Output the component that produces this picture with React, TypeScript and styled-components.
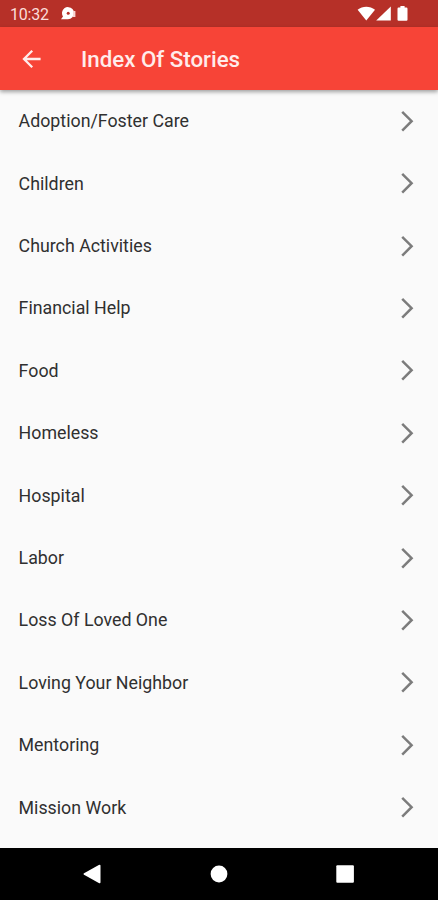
import React from 'react';
import styled, { createGlobalStyle } from 'styled-components';

const GlobalStyle = createGlobalStyle`
  * { box-sizing: border-box; }
  body { margin: 0; background: #fafafa; font-family: Roboto, sans-serif; }
`;

const Screen = styled.div`
  width: 438px;
  height: 900px;
  display: flex;
  flex-direction: column;
  overflow: hidden;
  background: #fafafa;
`;

const StatusBar = styled.div`
  height: 27px;
  flex: none;
  display: flex;
  align-items: center;
  padding: 1px 28px 0 10px;
  background: #b63028;
  color: #fbdcd9;
  font-size: 16px;
`;

const Clock = styled.span`
  width: 50px;
  letter-spacing: -0.2px;
`;

const StatusIcons = styled.div`
  display: flex;
  margin-left: auto;
`;

const AppBar = styled.header`
  height: 62.5px;
  flex: none;
  display: flex;
  align-items: center;
  padding: 1px 18px 0 22px;
  background: #f74437;
  color: #ffeceb;
  box-shadow: 0 2px 4px rgba(0, 0, 0, 0.36);
  z-index: 1;
`;

const BackButton = styled.button`
  width: 59px;
  height: 40px;
  padding: 0;
  border: 0;
  background: none;
  color: inherit;
  display: flex;
  align-items: center;
`;

const Title = styled.h1`
  margin: 0;
  font-size: 22.3px;
  font-weight: 500;
  white-space: nowrap;
`;

const List = styled.ul`
  flex: 1;
  min-height: 0;
  margin: 0;
  padding: 0;
  list-style: none;
  overflow: hidden;
`;

const Row = styled.li`
  height: 62.42px;
  display: flex;
  align-items: center;
  justify-content: space-between;
  padding: 0 23px 0 18.6px;
  color: #303030;
  font-size: 17.8px;
`;

const NavBar = styled.nav`
  height: 52.5px;
  flex: none;
  display: flex;
  align-items: center;
  justify-content: space-between;
  padding: 0 83px 0 82px;
  background: #000;
`;

const stories = [
  'Adoption/Foster Care',
  'Children',
  'Church Activities',
  'Financial Help',
  'Food',
  'Homeless',
  'Hospital',
  'Labor',
  'Loss Of Loved One',
  'Loving Your Neighbor',
  'Mentoring',
  'Mission Work',
];

export default function App() {
  return (
    <Screen>
      <GlobalStyle />
      <StatusBar>
        <Clock>10:32</Clock>
        <svg width="18" height="16" viewBox="0 0 18 16">
          <path d="M1 13.3 3 10.4A6 6 0 1 1 12.4 11.2 6 6 0 0 1 7 13.3Z" fill="#fff" />
          <circle cx="8.2" cy="7.2" r="1.5" fill="#b63028" />
          <path d="M13 5h2.4v6H13z" fill="#f8d5d2" />
        </svg>
        <StatusIcons>
          <svg width="53" height="18" viewBox="0 0 53 18" fill="#fff">
            <path d="M.6 4.7C5.5.7 13 .7 18 4.7L9.3 15.4Z" />
            <path d="M33.8 1.5v14H19.2Z" />
            <path d="M43.4 2.6V1h4.2v1.6h1.8q1.1 0 1.1 1.1v11q0 1.1-1.1 1.1h-7.8q-1.1 0-1.1-1.1v-11q0-1.1 1.1-1.1Z" />
          </svg>
        </StatusIcons>
      </StatusBar>
      <AppBar>
        <BackButton aria-label="Back">
          <svg width="20" height="20" viewBox="0 0 20 20" fill="none" stroke="currentColor" strokeWidth="2.3">
            <path d="M18.6 10H2.6M10.2 1.8 2 10l8.2 8.2" />
          </svg>
        </BackButton>
        <Title>Index Of Stories</Title>
      </AppBar>
      <List>
        {stories.map((story) => (
          <Row key={story}>
            <span>{story}</span>
            <svg width="15" height="24" viewBox="0 0 15 24" fill="none" stroke="#7c7c7c" strokeWidth="2.5">
              <path d="M2.2 2.8 11.6 12.2 2.2 21.6" />
            </svg>
          </Row>
        ))}
      </List>
      <NavBar>
        <svg width="20" height="20" viewBox="0 0 20 20" fill="#fff">
          <path d="M2 9.2 16.8.9q1.7-.8 1.7.8v16.6q0 1.6-1.7.8L2 10.8q-1.3-.8 0-1.6Z" />
        </svg>
        <svg width="18" height="18" viewBox="0 0 18 18" fill="#fff">
          <circle cx="9" cy="9" r="8.4" />
        </svg>
        <svg width="20" height="20" viewBox="0 0 20 20" fill="#fff">
          <rect x="1.3" y="1.2" width="17.6" height="17.6" rx="1" />
        </svg>
      </NavBar>
    </Screen>
  );
}
